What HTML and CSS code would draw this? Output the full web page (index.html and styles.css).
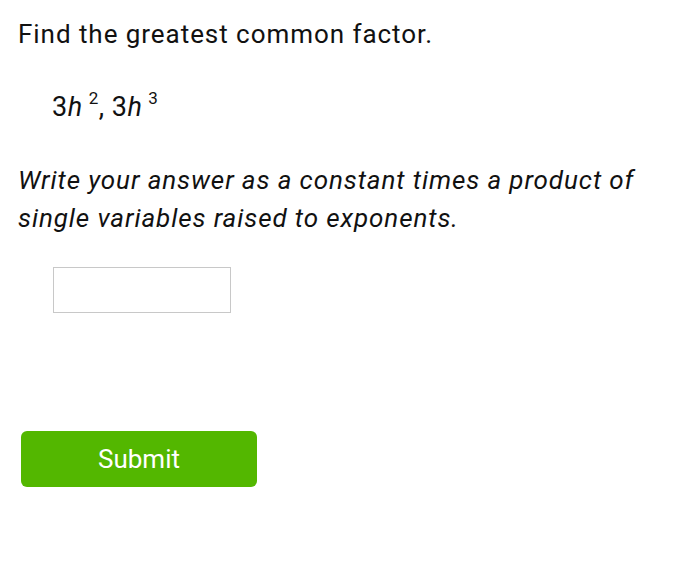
FILE: index.html
```html
<!DOCTYPE html>
<html>
<head>
<meta charset="utf-8">
<link rel="stylesheet" href="styles.css">
</head>
<body>
<div class="page">
  <p class="prompt">Find the greatest common factor.</p>
  <p class="math"><span class="n">3</span><span class="v">h</span><sup>2</sup><span class="n">, 3</span><span class="v">h</span><sup>3</sup></p>
  <p class="instr">Write your answer as a constant times a product of single variables raised to exponents.</p>
  <div class="answer"><div class="box"></div></div>
  <div class="actions"><button class="submit">Submit</button></div>
</div>
</body>
</html>
```

FILE: styles.css
```css
html, body {
  margin: 0;
  padding: 0;
  background: #fff;
}
.page {
  font-family: Roboto, "Liberation Sans", sans-serif;
  color: #111;
  padding: 15px 0 0 18px;
  display: flex;
  flex-direction: column;
}
.prompt {
  margin: 0;
  font-size: 26px;
  line-height: 38px;
  letter-spacing: 0.95px;
}
.math {
  margin: 35px 0 0 34px;
  font-size: 27px;
  line-height: 38px;
  letter-spacing: 0.5px;
}
.math .v {
  font-style: italic;
}
.math sup {
  font-size: 17px;
  vertical-align: 12px;
  line-height: 0;
  margin-left: 6px;
}
.instr {
  margin: 35px 0 0 0;
  width: 650px;
  font-size: 26px;
  font-style: italic;
  line-height: 38px;
  letter-spacing: 0.9px;
}
.answer {
  margin: 30px 0 0 35px;
}
.box {
  width: 176px;
  height: 44px;
  border: 1px solid #c8c8c8;
}
.actions {
  margin: 118px 0 0 3px;
}
.submit {
  width: 236px;
  height: 56px;
  border: none;
  border-radius: 6px;
  background: #53b700;
  color: #fff;
  font-family: Roboto, "Liberation Sans", sans-serif;
  font-size: 26px;
  padding: 0;
}
```
